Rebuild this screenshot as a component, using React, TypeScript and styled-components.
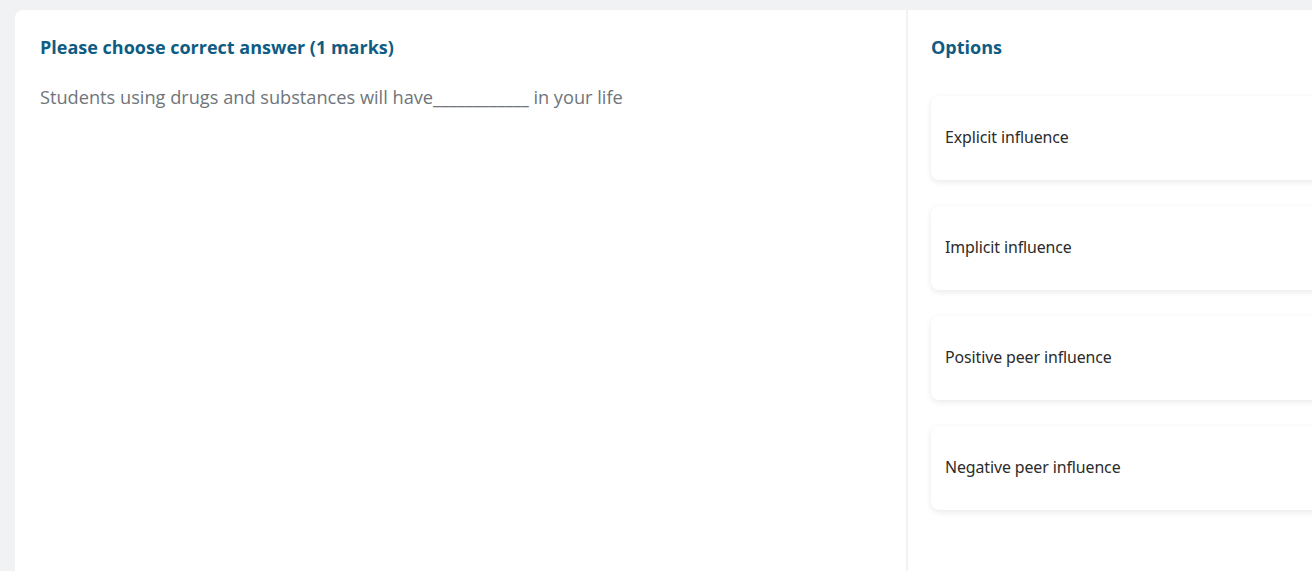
import React from "react";
import styled, { createGlobalStyle } from "styled-components";

const Global = createGlobalStyle`
  html, body { margin: 0; padding: 0; background: #f1f2f4; overflow: hidden; }
  body { font-family: "Open Sans", "Noto Sans", sans-serif; }
  * { box-sizing: border-box; }
`;

const Page = styled.div`
  padding: 10px 0 0 15px;
  width: 1400px;
  height: 571px;
  overflow: hidden;
`;

const Card = styled.div`
  display: grid;
  grid-template-columns: 891px 2px 1fr;
  background: #ffffff;
  border-radius: 8px 0 0 0;
  width: 1340px;
  height: 561px;
`;

const Panel = styled.section<{ $pad: number }>`
  padding: 24px ${(p) => p.$pad}px 0 ${(p) => p.$pad}px;
  display: flex;
  flex-direction: column;
`;

const Divider = styled.div`
  background: #f1f2f4;
`;

const Heading = styled.h2`
  margin: 0;
  font-size: 18px;
  line-height: 26px;
  font-weight: 700;
  color: #0f5c83;
`;

const Question = styled.p`
  margin: 24px 0 0;
  font-size: 18.2px;
  line-height: 26px;
  color: #6f757b;
`;

const OptionList = styled.div`
  display: flex;
  flex-direction: column;
  gap: 26px;
  margin-top: 36px;
`;

const Option = styled.div`
  height: 84px;
  display: flex;
  align-items: center;
  padding: 0 14px 2px;
  background: #fff;
  border-radius: 8px;
  box-shadow: 0 2px 6px rgba(0, 0, 0, 0.09);
  font-family: "Noto Sans", "Open Sans", sans-serif;
  font-size: 15.9px;
  letter-spacing: -0.1px;
  color: #2b2b2b;
  width: 420px;
`;

const options = [
  "Explicit influence",
  "Implicit influence",
  "Positive peer influence",
  "Negative peer influence",
];

export default function App() {
  return (
    <>
      <Global />
      <Page>
        <Card>
          <Panel $pad={25}>
            <Heading>Please choose correct answer (1 marks)</Heading>
            <Question>
              Students using drugs and substances will have____________ in your life
            </Question>
          </Panel>
          <Divider />
          <Panel $pad={23}>
            <Heading>Options</Heading>
            <OptionList>
              {options.map((o) => (
                <Option key={o}>{o}</Option>
              ))}
            </OptionList>
          </Panel>
        </Card>
      </Page>
    </>
  );
}
